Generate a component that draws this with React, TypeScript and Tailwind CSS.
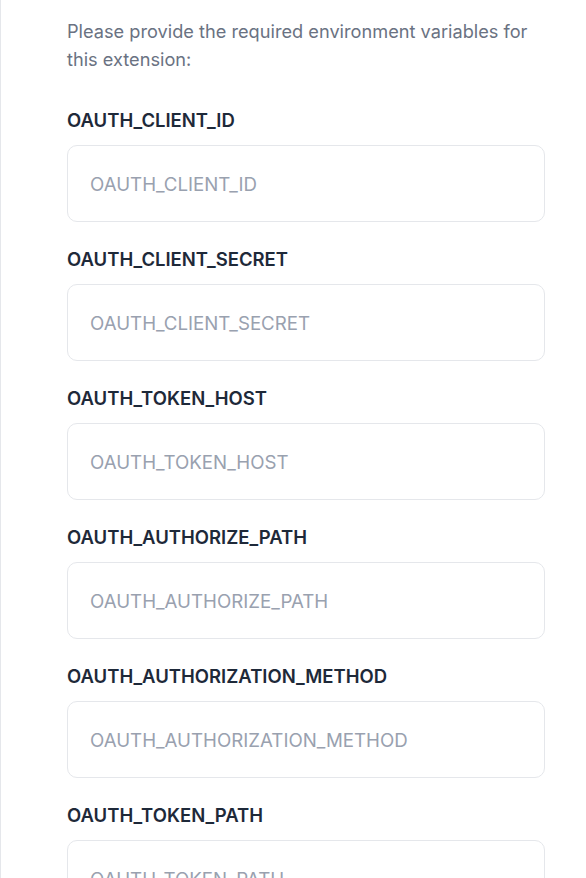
import React from 'react';

const fields = [
  'OAUTH_CLIENT_ID',
  'OAUTH_CLIENT_SECRET',
  'OAUTH_TOKEN_HOST',
  'OAUTH_AUTHORIZE_PATH',
  'OAUTH_AUTHORIZATION_METHOD',
  'OAUTH_TOKEN_PATH',
];

export default function App() {
  return (
    <div
      className="min-h-screen bg-white border-l border-gray-200 pl-[66px] pr-[41px] pt-[17px]"
      style={{ fontFamily: 'Inter, "Liberation Sans", sans-serif' }}
    >
      <p className="text-[18.2px] leading-[28px] text-gray-500">
        Please provide the required environment variables for this extension:
      </p>

      <div className="mt-[33px] flex flex-col gap-[23px]">
        {fields.map(name => (
          <div key={name} className="flex flex-col gap-[11px]">
            <label className="text-[18.5px] leading-[28px] font-semibold text-gray-800">{name}</label>
            <input
              type="text"
              placeholder={name}
              className="h-[77px] w-full rounded-[10px] border border-gray-200 bg-white px-[22px] pt-px text-[18.7px] text-gray-800 placeholder:text-gray-400 outline-none"
            />
          </div>
        ))}
      </div>
    </div>
  );
}
